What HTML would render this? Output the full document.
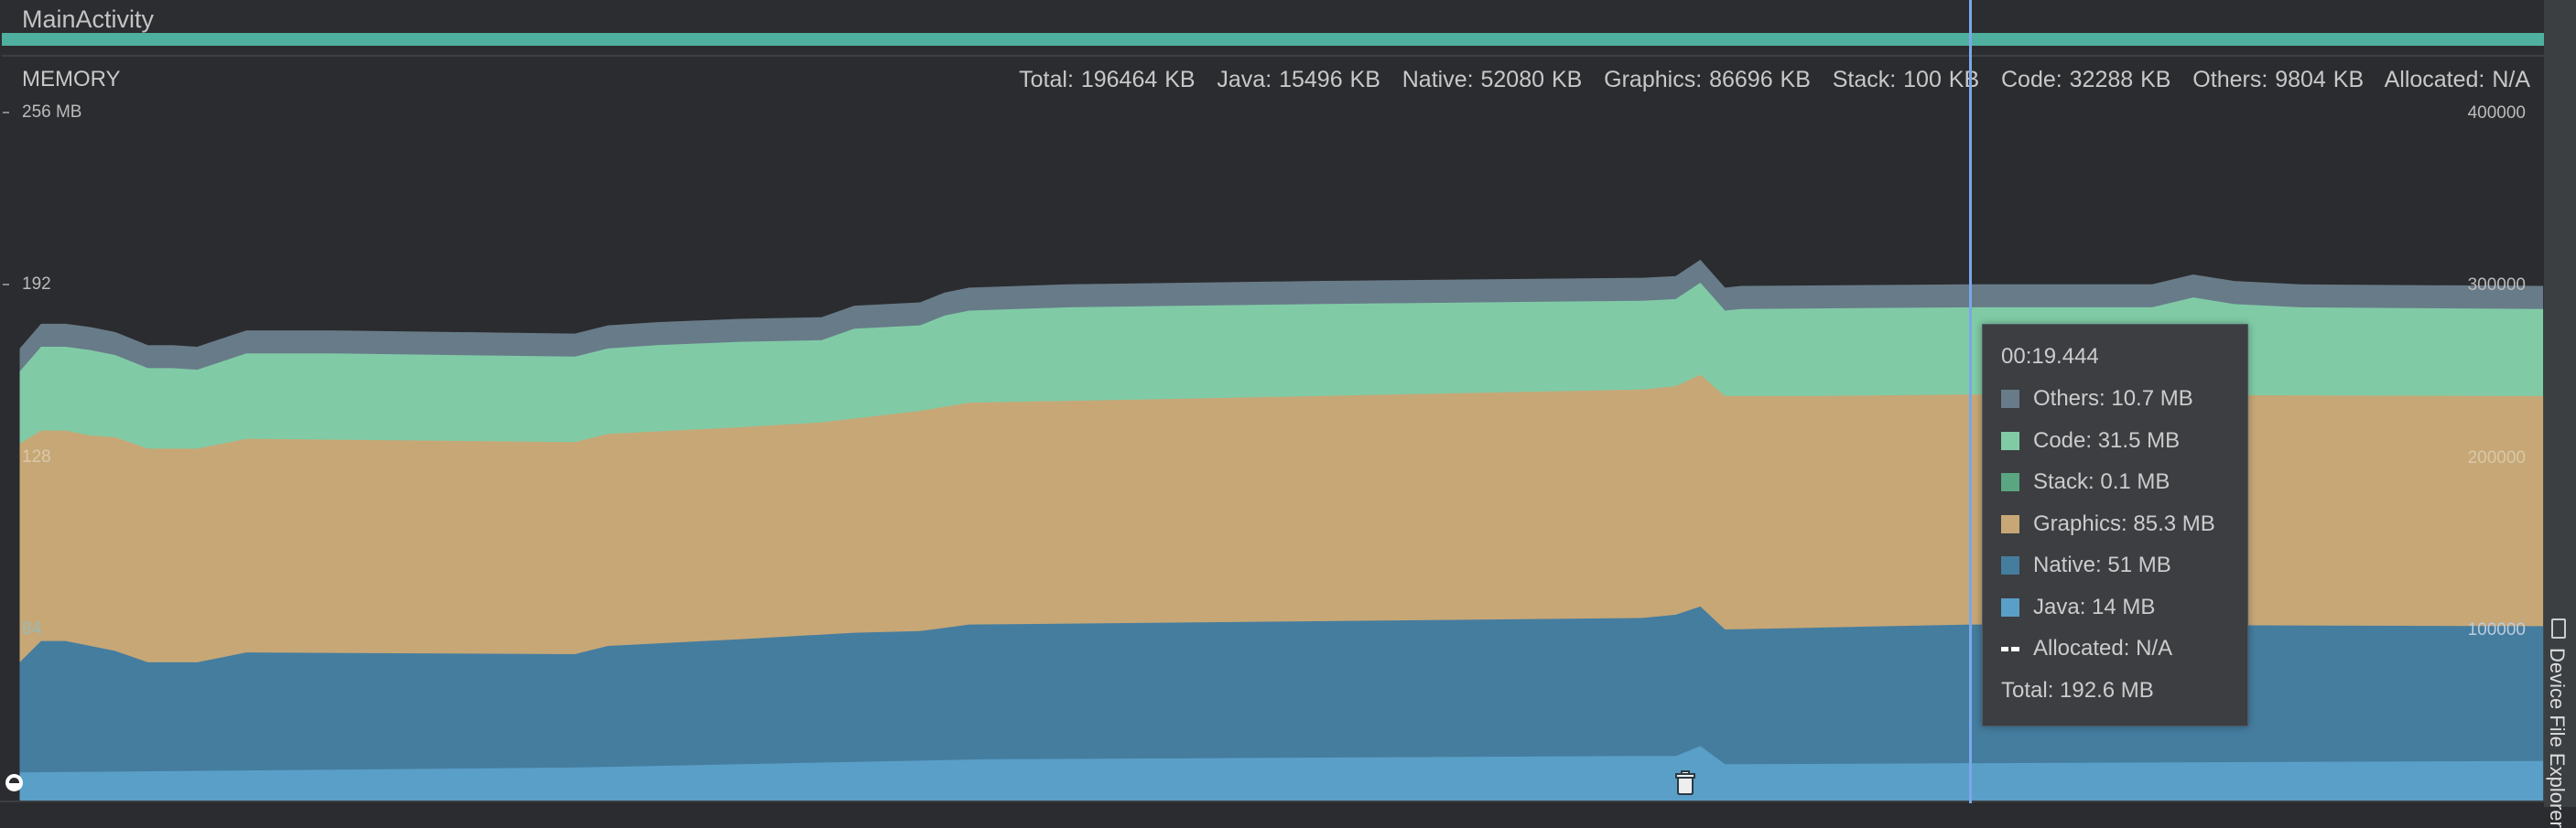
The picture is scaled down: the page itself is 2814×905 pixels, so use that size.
<!DOCTYPE html>
<html><head><meta charset="utf-8"><style>
html,body{margin:0;padding:0;}
body{width:2814px;height:882px;position:relative;overflow:hidden;background:#2b2c2f;font-family:"Liberation Sans",sans-serif;color:#c8c8c8;}
.t{position:absolute;white-space:nowrap;}
.ax{font-size:19px;color:#bbb;}
.tt{position:absolute;left:2165px;top:354px;width:289px;height:438px;background:#3c3e41;border:1px solid #4f5a63;box-shadow:0 0 8px rgba(0,0,0,.35);font-size:24px;color:#ccc;}
.tt div{position:absolute;left:20px;white-space:nowrap;}
.sw{display:inline-block;width:20px;height:20px;vertical-align:-3px;margin-right:15px;}
</style></head><body>
<div style="position:absolute;left:0;top:0;width:2814px;height:60px;background:#2b2d30"></div>
<div class="t" style="left:24px;top:6px;font-size:27px;color:#c4c4c4">MainActivity</div>
<div style="position:absolute;left:2px;top:36px;width:2812px;height:14px;background:#4fb0a0"></div>
<div style="position:absolute;left:2px;top:60px;width:2812px;height:2px;background:#3d3f42"></div>
<div class="t" style="left:24px;top:73px;font-size:24px;color:#c8c8c8">MEMORY</div>
<div class="t" style="right:50px;top:73px;font-size:25px;color:#c8c8c8;word-spacing:1px">Total: 196464 KB&nbsp;&nbsp; Java: 15496 KB&nbsp;&nbsp; Native: 52080 KB&nbsp;&nbsp; Graphics: 86696 KB&nbsp;&nbsp; Stack: 100 KB&nbsp;&nbsp; Code: 32288 KB&nbsp;&nbsp; Others: 9804 KB&nbsp;&nbsp; Allocated: N/A</div>
<svg style="position:absolute;left:0;top:0" width="2814" height="882" viewBox="0 0 1568 491" preserveAspectRatio="none">
<path fill="#687b89" d="M12,212 L25,197 40,197 55,199 70,202 90,210 105,210 120,211 150,201 200,201 350,203 370,198 400,196 450,194 500,193 520,186 560,184 575,178 590,175 650,173 800,171 1000,169 1020,168 1035,158 1050,175 1060,174 1200,173 1310,173 1335,167 1360,171 1400,173 1548,174 L1548,488 L12,488Z"/>
<path fill="#80cba6" d="M12,226 L25,211 40,211 55,213 70,216 90,224 105,224 120,225 150,215 200,215 350,217 370,212 400,210 450,208 500,207 520,200 560,198 575,192 590,189 650,187 800,185 1000,183 1020,182 1035,172 1050,189 1060,188 1200,187 1310,187 1335,181 1360,185 1400,187 1548,188 L1548,488 L12,488Z"/>
<path fill="#c7a776" d="M12,270 L25,262 40,262 55,265 70,266 90,273 120,273 150,267 350,269 370,264 450,260 500,257 560,250 590,245 700,243 1000,237 1020,235 1035,228 1050,241 1100,241 1200,240 1548,241 L1548,488 L12,488Z"/>
<path fill="#457d9f" d="M12,403 L25,390 40,390 55,393 70,396 90,403 120,403 150,397 350,398 370,393 450,389 520,385 560,384 590,380 700,379 1000,376 1020,374 1035,369 1050,383 1100,382 1200,380 1548,381 L1548,488 L12,488Z"/>
<path fill="#5a9fc8" d="M12,470 L350,467 600,462 1000,460 1020,460 1035,454 1050,465 1548,463 L1548,488 L12,488Z"/>
</svg>
<div style="position:absolute;left:0;top:876px;width:2814px;height:6px;background:#2b2c2f"></div>
<div style="position:absolute;left:0;top:875px;width:2780px;height:2px;background:#3c3e41"></div>
<div class="t ax" style="left:24px;top:112px">256 MB</div>
<div style="position:absolute;left:3px;top:122px;width:7px;height:2px;background:#888"></div>
<div class="t ax" style="left:24px;top:300px">192</div>
<div style="position:absolute;left:3px;top:310px;width:7px;height:2px;background:#888"></div>
<div class="t ax" style="left:24px;top:489px;color:#d9c9a8">128</div>
<div class="t ax" style="left:24px;top:677px;color:#9bb">84</div>
<div class="t ax" style="right:55px;top:113px">400000</div>
<div class="t ax" style="right:55px;top:301px">300000</div>
<div class="t ax" style="right:55px;top:490px;color:#d9c9a8">200000</div>
<div class="t ax" style="right:55px;top:678px;color:#bcd">100000</div>
<div style="position:absolute;left:2779px;top:0;width:35px;height:882px;background:#3c3f41"></div>
<div class="t" style="left:2806px;top:708px;transform:rotate(90deg);transform-origin:0 0;font-size:22px;color:#ddd">Device File Explorer</div>
<div style="position:absolute;left:2787px;top:676px;width:12px;height:18px;border:2px solid #ccc;border-radius:2px"></div>
<div style="position:absolute;left:2151px;top:0;width:3px;height:878px;background:#7aa7e8"></div>
<div style="position:absolute;left:6px;top:846px;width:19px;height:19px;border-radius:50%;background:#fff"></div>
<div style="position:absolute;left:10px;top:850px;width:11px;height:6px;border-radius:6px 6px 0 0;background:#2b2c2f"></div>
<svg style="position:absolute;left:1828px;top:840px" width="26" height="30" viewBox="0 0 26 30"><path d="M3,6 H23 V10 H3Z M9,6 V3 H17 V6" fill="#eee" stroke="#2b3a44" stroke-width="2"/><path d="M5,10 H21 V26 Q21,28 19,28 H7 Q5,28 5,26Z" fill="#eee" stroke="#2b3a44" stroke-width="2"/></svg>
<div class="tt">
<div style="top:21px">00:19.444</div>
<div style="top:67px"><span class="sw" style="background:#687b89"></span>Others: 10.7 MB</div>
<div style="top:113px"><span class="sw" style="background:#80cba6"></span>Code: 31.5 MB</div>
<div style="top:158px"><span class="sw" style="background:#5aa582"></span>Stack: 0.1 MB</div>
<div style="top:204px"><span class="sw" style="background:#c7a776"></span>Graphics: 85.3 MB</div>
<div style="top:249px"><span class="sw" style="background:#457d9f"></span>Native: 51 MB</div>
<div style="top:295px"><span class="sw" style="background:#5a9fc8"></span>Java: 14 MB</div>
<div style="top:340px"><span style="display:inline-block;width:8px;height:5px;background:#fff;margin-right:3px;vertical-align:4px"></span><span style="display:inline-block;width:9px;height:5px;background:#fff;margin-right:15px;vertical-align:4px"></span>Allocated: N/A</div>
<div style="top:386px">Total: 192.6 MB</div>
</div>
</body></html>
